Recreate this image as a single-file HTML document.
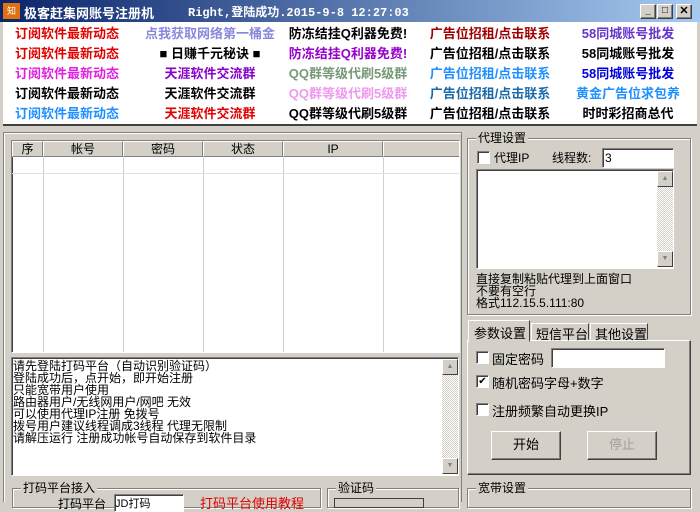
<!DOCTYPE html><html><head><meta charset="utf-8"><style>
*{margin:0;padding:0;box-sizing:border-box}
body{width:700px;height:502px;overflow:hidden;background:#d4d0c8;font:12px "Liberation Sans","Noto Sans CJK SC",sans-serif;position:relative;color:#000}
.a{position:absolute}
.tb{left:0;top:0;width:700px;height:22px;background:linear-gradient(90deg,#0a246a,#a6caf0);color:#fff;font-weight:bold;font-size:13px}
.ads{left:3px;top:22px;width:694px;height:104px;background:#fff;border-bottom:2px solid #404040}
.ad{position:absolute;font-weight:bold;font-size:13px;white-space:nowrap;transform:translateX(-50%);line-height:16px}
.sunk{background:#fff;border-top:1px solid #808080;border-left:1px solid #808080;border-right:1px solid #fff;border-bottom:1px solid #fff;box-shadow:inset 1px 1px 0 #404040}
.grp{border:1px solid #808080;box-shadow:1px 1px 0 #fff inset,1px 1px 0 #fff}
.lg{position:absolute;top:-8px;left:8px;background:#d4d0c8;padding:0 2px;font-size:12px;line-height:14px}
.cb{position:absolute;width:13px;height:13px;background:#fff;border-top:1px solid #808080;border-left:1px solid #808080;border-right:1px solid #fff;border-bottom:1px solid #fff;box-shadow:inset 1px 1px 0 #404040;font-size:10px;line-height:11px;text-align:center}
.btn{position:absolute;background:#d4d0c8;border:1px solid;border-color:#fff #404040 #404040 #fff;box-shadow:inset -1px -1px 0 #808080;text-align:center}
.sb{position:absolute;width:16px;background:repeating-conic-gradient(#d4d0c8 0 25%,#fff 0 50%) 0 0/2px 2px}
.ar{position:absolute;left:0;width:16px;height:16px;background:#d4d0c8;border:1px solid;border-color:#fff #404040 #404040 #fff;font-size:7px;color:#808080;text-align:center;line-height:14px}
.hd{position:absolute;top:0;height:16px;background:#d4d0c8;border:1px solid;border-color:#fff #808080 #808080 #fff;text-align:center;line-height:14px}
.cl{position:absolute;top:16px;bottom:0;width:1px;background:#d0d0d0}
.log{line-height:12px;font-size:12px}
</style></head><body>
<div class="a tb"><div class="a" style="left:3px;top:3px;width:17px;height:16px;background:#e07010;color:#fff;font-size:9px;line-height:16px;text-align:center;font-weight:normal">知己</div><span class="a" style="left:24px;top:3px">极客赶集网账号注册机</span><span class="a" style="left:188px;top:3px;font-family:'Liberation Mono','Noto Sans CJK SC',monospace;font-size:12px">Right,登陆成功.2015-9-8 12:27:03</span>
<div class="btn" style="left:640px;top:4px;width:16px;height:15px;font-size:10px;line-height:12px;color:#000">_</div><div class="btn" style="left:657px;top:4px;width:16px;height:15px;font-size:10px;line-height:12px;color:#000">□</div><div class="btn" style="left:676px;top:4px;width:16px;height:15px;font-size:11px;line-height:13px;color:#000">✕</div></div>
<div class="a ads">
<div class="ad" style="left:64px;top:4px;color:#e00000">订阅软件最新动态</div><div class="ad" style="left:207px;top:4px;color:#8888dd">点我获取网络第一桶金</div><div class="ad" style="left:345px;top:4px">防冻结挂Q利器免费!</div><div class="ad" style="left:487px;top:4px;color:#a00000">广告位招租/点击联系</div><div class="ad" style="left:625px;top:4px;color:#6633cc">58同城账号批发</div>
<div class="ad" style="left:64px;top:24px;color:#e00000">订阅软件最新动态</div><div class="ad" style="left:207px;top:24px">■ 日赚千元秘诀 ■</div><div class="ad" style="left:345px;top:24px;color:#9900cc">防冻结挂Q利器免费!</div><div class="ad" style="left:487px;top:24px">广告位招租/点击联系</div><div class="ad" style="left:625px;top:24px">58同城账号批发</div>
<div class="ad" style="left:64px;top:44px;color:#e020e0">订阅软件最新动态</div><div class="ad" style="left:207px;top:44px;color:#8800cc">天涯软件交流群</div><div class="ad" style="left:345px;top:44px;color:#779977">QQ群等级代刷5级群</div><div class="ad" style="left:487px;top:44px;color:#1e90ff">广告位招租/点击联系</div><div class="ad" style="left:625px;top:44px;color:#0000dd">58同城账号批发</div>
<div class="ad" style="left:64px;top:64px">订阅软件最新动态</div><div class="ad" style="left:207px;top:64px">天涯软件交流群</div><div class="ad" style="left:345px;top:64px;color:#ee99ee">QQ群等级代刷5级群</div><div class="ad" style="left:487px;top:64px;color:#1a6aaa">广告位招租/点击联系</div><div class="ad" style="left:625px;top:64px;color:#1e90ff">黄金广告位求包养</div>
<div class="ad" style="left:64px;top:84px;color:#1e90ff">订阅软件最新动态</div><div class="ad" style="left:207px;top:84px;color:#e00000">天涯软件交流群</div><div class="ad" style="left:345px;top:84px">QQ群等级代刷5级群</div><div class="ad" style="left:487px;top:84px">广告位招租/点击联系</div><div class="ad" style="left:625px;top:84px">时时彩招商总代</div>
</div>
<div class="a" style="left:3px;top:132px;width:459px;height:370px;border:1px solid #808080;border-bottom:none;box-shadow:inset 1px 1px 0 #fff"></div>
<div class="a sunk" style="left:11px;top:140px;width:449px;height:213px;overflow:hidden">
<div class="hd" style="left:0;width:31px">序</div><div class="hd" style="left:31px;width:80px">帐号</div><div class="hd" style="left:111px;width:80px">密码</div><div class="hd" style="left:191px;width:80px">状态</div><div class="hd" style="left:271px;width:100px">IP</div><div class="hd" style="left:371px;width:80px"></div>
<div class="cl" style="left:31px"></div><div class="cl" style="left:111px"></div><div class="cl" style="left:191px"></div><div class="cl" style="left:271px"></div><div class="cl" style="left:371px"></div>
<div class="a" style="left:0;top:32px;width:100%;height:1px;background:#e0e0e0"></div></div>
<div class="a sunk log" style="left:11px;top:357px;width:448px;height:119px;padding:2px 0 0 1px">请先登陆打码平台（自动识别验证码）<br>登陆成功后，点开始，即开始注册<br>只能宽带用户使用<br>路由器用户/无线网用户/网吧 无效<br>可以使用代理IP注册 免拨号<br>拨号用户建议线程调成3线程 代理无限制<br>请解压运行 注册成功帐号自动保存到软件目录
<div class="sb" style="left:430px;top:1px;height:115px"><div class="ar" style="top:0">▲</div><div class="ar" style="bottom:0">▼</div></div></div>
<div class="a grp" style="left:12px;top:488px;width:309px;height:20px"><span class="lg">打码平台接入</span><span class="a" style="left:45px;top:6px">打码平台</span><div class="a sunk" style="left:101px;top:5px;width:70px;height:18px;font-size:11px">JD打码</div><span class="a" style="left:187px;top:4px;color:#e00000;font-size:13px">打码平台使用教程</span></div>
<div class="a grp" style="left:327px;top:488px;width:132px;height:20px"><span class="lg">验证码</span><div class="a" style="left:6px;top:9px;width:90px;height:10px;border:1px solid #404040"></div></div>
<div class="a grp" style="left:467px;top:488px;width:224px;height:20px"><span class="lg">宽带设置</span></div>
<div class="a grp" style="left:467px;top:138px;width:224px;height:177px"><span class="lg">代理设置</span>
<div class="cb" style="left:9px;top:12px"></div><span class="a" style="left:26px;top:10px">代理IP</span><span class="a" style="left:84px;top:10px">线程数:</span>
<div class="a sunk" style="left:134px;top:9px;width:72px;height:20px;padding:2px 0 0 2px">3</div>
<div class="a sunk" style="left:8px;top:30px;width:198px;height:100px"><div class="sb" style="left:180px;top:1px;height:96px"><div class="ar" style="top:0">▲</div><div class="ar" style="bottom:0">▼</div></div></div>
<div class="a" style="left:8px;top:134px;line-height:12px">直接复制粘贴代理到上面窗口<br>不要有空行<br>格式112.15.5.111:80</div></div>
<div class="a" style="left:467px;top:340px;width:224px;height:135px;border:1px solid;border-color:#fff #404040 #404040 #fff;box-shadow:inset -1px -1px 0 #808080"></div>
<div class="a" style="left:468px;top:320px;width:62px;height:22px;border:1px solid;border-color:#fff #404040 transparent #fff;background:#d4d0c8;padding:2px 0 0 5px;font-size:13px">参数设置</div>
<div class="a" style="left:531px;top:323px;width:58px;height:17px;border:1px solid;border-color:#fff #404040 transparent #fff;padding:0 0 0 4px;font-size:13px">短信平台</div>
<div class="a" style="left:590px;top:323px;width:58px;height:17px;border:1px solid;border-color:#fff #404040 transparent #fff;padding:0 0 0 4px;font-size:13px">其他设置</div>
<div class="cb" style="left:476px;top:351px"></div><span class="a" style="left:492px;top:349px;font-size:13px">固定密码</span>
<div class="a sunk" style="left:551px;top:348px;width:114px;height:20px"></div>
<div class="cb" style="left:476px;top:375px">✔</div><span class="a" style="left:492px;top:373px;font-size:13px">随机密码字母+数字</span>
<div class="cb" style="left:476px;top:403px"></div><span class="a" style="left:492px;top:401px;font-size:13px">注册频繁自动更换IP</span>
<div class="btn" style="left:491px;top:431px;width:70px;height:29px;line-height:26px;font-size:13px">开始</div>
<div class="btn" style="left:587px;top:431px;width:70px;height:29px;line-height:26px;font-size:13px;color:#a0a0a0">停止</div>
</body></html>
